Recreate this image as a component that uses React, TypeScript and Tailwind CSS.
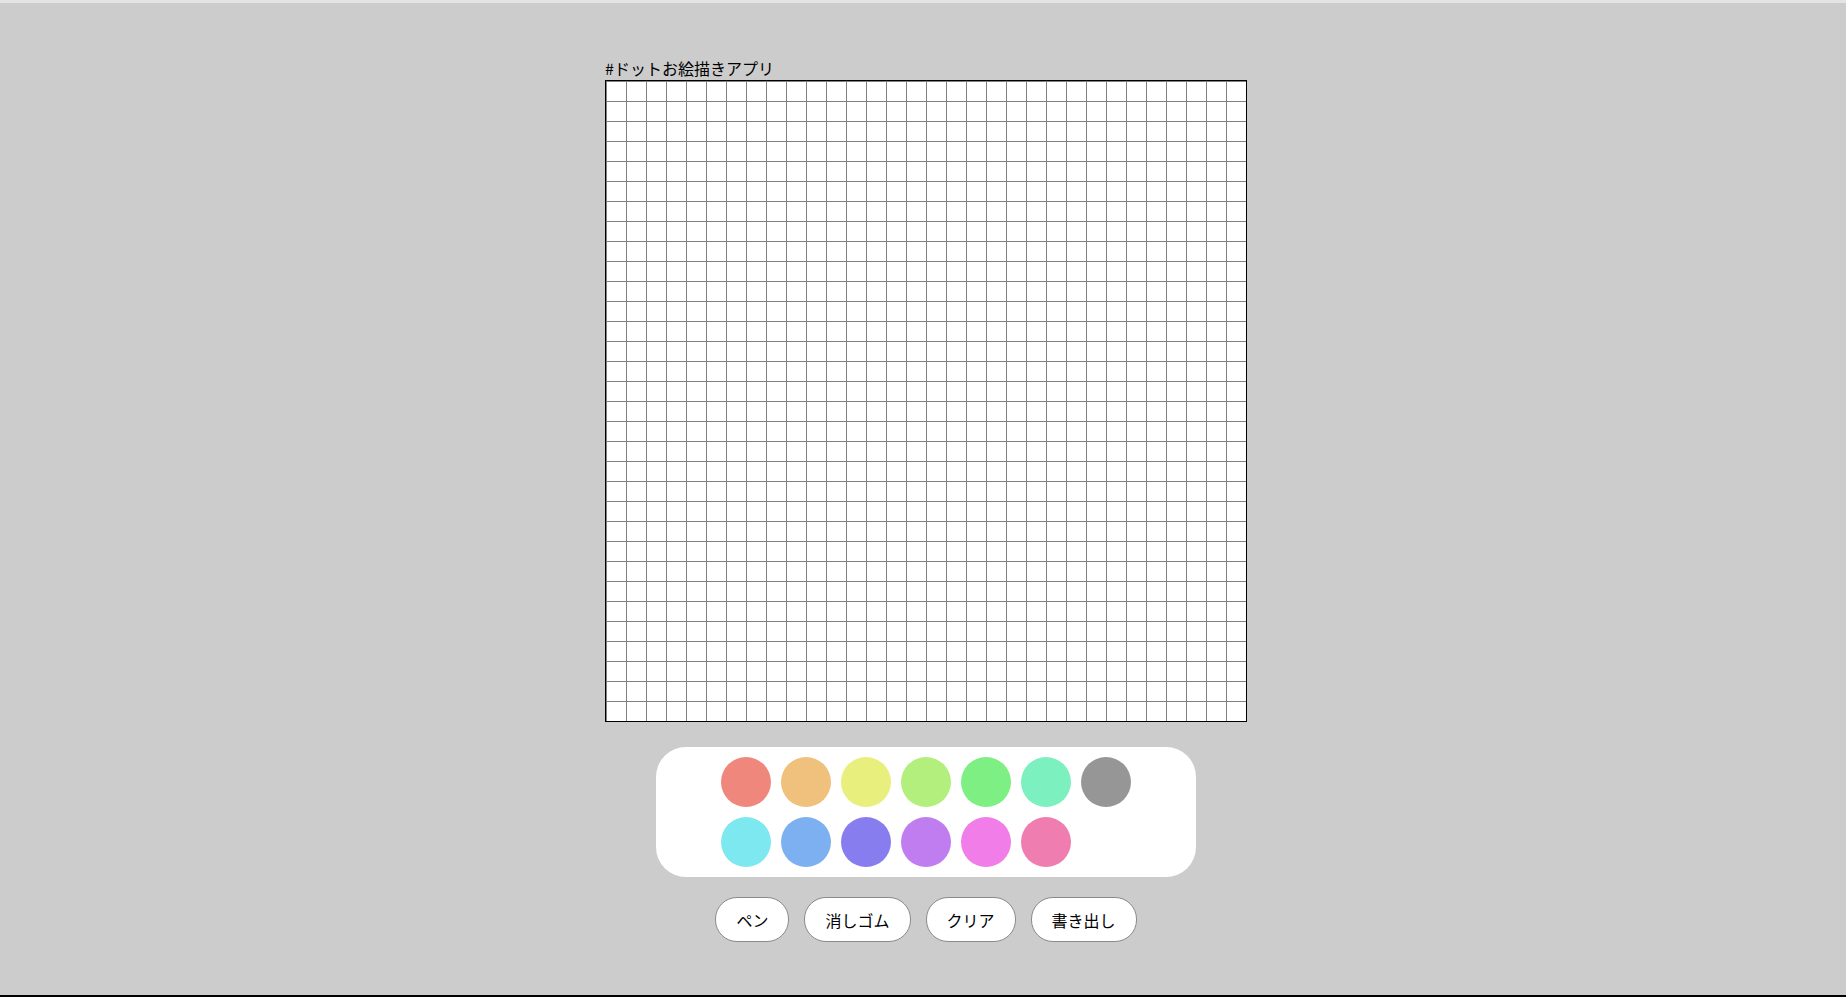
import React, { useState } from "react";

const SIZE = 32;

const COLORS = [
  ["#f0877d", "#f0c07d", "#e8ef7d", "#b3ef7d", "#7def83", "#7df0c0", "#969696"],
  ["#7de8f0", "#7db0f0", "#877def", "#bf7def", "#f07de8", "#f07db0"],
];

const BUTTONS = ["ペン", "消しゴム", "クリア", "書き出し"];

const font = { fontFamily: '"Noto Sans CJK JP", "Noto Sans", sans-serif' };

const App: React.FC = () => {
  const [color, setColor] = useState(COLORS[0][0]);
  const [mode, setMode] = useState("ペン");
  const [dots, setDots] = useState<Record<number, string>>({});

  const paint = (i: number) => {
    if (mode === "消しゴム") {
      const next = { ...dots };
      delete next[i];
      setDots(next);
    } else {
      setDots({ ...dots, [i]: color });
    }
  };

  const handleButton = (label: string) => {
    if (label === "クリア") setDots({});
    else if (label !== "書き出し") setMode(label);
  };

  return (
    <div className="flex h-screen flex-col text-black" style={font}>
      <div className="h-[3px] shrink-0 bg-[#e4e4e4]" />
      <div className="flex flex-1 flex-col items-center bg-[#cccccc] pl-[6px] pt-[53px]">
        <div>
          <p className="h-6 text-base leading-6">#ドットお絵描きアプリ</p>
          <div className="grid grid-cols-[repeat(32,20px)] border border-black bg-white">
            {Array.from({ length: SIZE * SIZE }).map((_, i) => (
              <div
                key={i}
                onClick={() => paint(i)}
                className="h-5 w-5 border-l border-t border-[#808080]"
                style={dots[i] ? { backgroundColor: dots[i] } : undefined}
              />
            ))}
          </div>
        </div>

        <div className="mt-[25px] flex w-[540px] flex-col rounded-[30px] bg-white px-[60px] py-[5px]">
          {COLORS.map((row, r) => (
            <div key={r} className="flex">
              {row.map((c) => (
                <button
                  key={c}
                  onClick={() => setColor(c)}
                  className="m-[5px] h-[50px] w-[50px] shrink-0 cursor-pointer rounded-full"
                  style={{ backgroundColor: c }}
                />
              ))}
            </div>
          ))}
        </div>

        <div className="mt-5 flex gap-[15px]">
          {BUTTONS.map((label) => (
            <button
              key={label}
              onClick={() => handleButton(label)}
              className="h-[45px] cursor-pointer rounded-[22px] border border-[#8a8a8a] bg-white px-5 text-base leading-none"
            >
              {label}
            </button>
          ))}
        </div>
      </div>
      <div className="h-[2px] shrink-0 bg-black" />
    </div>
  );
};

export default App;
